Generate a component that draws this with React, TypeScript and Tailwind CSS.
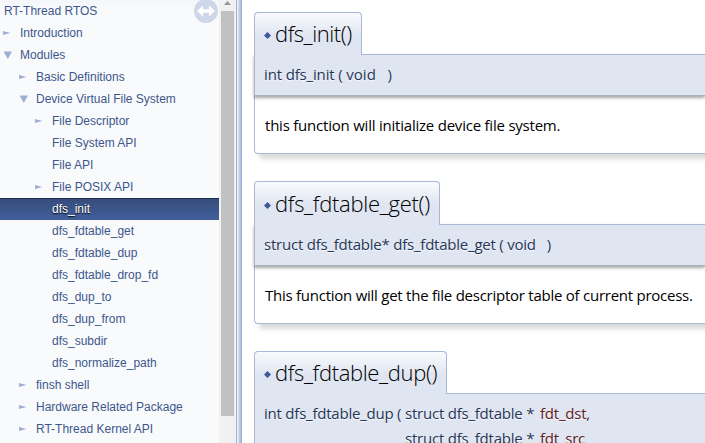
import React from "react";

type Arrow = "open" | "closed" | "none";
type Item = { label: string; level: number; arrow: Arrow; selected?: boolean };

const items: Item[] = [
  { label: "RT-Thread RTOS", level: 0, arrow: "none" },
  { label: "Introduction", level: 1, arrow: "closed" },
  { label: "Modules", level: 1, arrow: "open" },
  { label: "Basic Definitions", level: 2, arrow: "closed" },
  { label: "Device Virtual File System", level: 2, arrow: "open" },
  { label: "File Descriptor", level: 3, arrow: "closed" },
  { label: "File System API", level: 3, arrow: "none" },
  { label: "File API", level: 3, arrow: "none" },
  { label: "File POSIX API", level: 3, arrow: "closed" },
  { label: "dfs_init", level: 3, arrow: "none", selected: true },
  { label: "dfs_fdtable_get", level: 3, arrow: "none" },
  { label: "dfs_fdtable_dup", level: 3, arrow: "none" },
  { label: "dfs_fdtable_drop_fd", level: 3, arrow: "none" },
  { label: "dfs_dup_to", level: 3, arrow: "none" },
  { label: "dfs_dup_from", level: 3, arrow: "none" },
  { label: "dfs_subdir", level: 3, arrow: "none" },
  { label: "dfs_normalize_path", level: 3, arrow: "none" },
  { label: "finsh shell", level: 2, arrow: "closed" },
  { label: "Hardware Related Package", level: 2, arrow: "closed" },
  { label: "RT-Thread Kernel API", level: 2, arrow: "closed" },
];

const indents = ["pl-1", "pl-0", "pl-4", "pl-8"];

function ArrowIcon({ arrow }: { arrow: Arrow }) {
  return (
    <svg className="h-[22px] w-5 shrink-0" viewBox="0 0 20 22" fill="#9cafd4">
      {arrow === "closed" && <path d="M3 9 10.3 11 3 13Z" />}
      {arrow === "open" && <path d="M3.5 7.5H12L7.8 15Z" />}
    </svg>
  );
}

function Row({ item }: { item: Item }) {
  return (
    <div
      className={`flex h-[22px] shrink-0 items-center whitespace-nowrap text-[12px] leading-[22px] ${indents[item.level]} ${
        item.selected
          ? "border-t border-[#1d2c4d] bg-linear-to-b from-[#364d7c] to-[#425f9b] text-white [text-shadow:0_1px_1px_#000]"
          : "text-[#3d578c]"
      }`}
    >
      {item.level > 0 && <ArrowIcon arrow={item.arrow} />}
      <span className="-mt-px">{item.label}</span>
    </div>
  );
}

function Sidebar() {
  return (
    <nav className="relative flex w-[219px] shrink-0 flex-col overflow-hidden bg-linear-to-b from-[#f4f6fa] to-[#f9fafc] to-[10px] font-['Liberation_Sans',Arial,sans-serif]">
      {items.map((item) => (
        <Row key={item.label} item={item} />
      ))}
      <svg className="absolute left-[194px] top-[-1px]" width="24" height="24" viewBox="0 0 24 24">
        <circle cx="12" cy="12" r="12" fill="#ced7e9" />
        <path d="M3 12 9 6.5V10.3H15V6.5L21 12 15 17.5V13.7H9V17.5Z" fill="#fff" />
      </svg>
    </nav>
  );
}

function Scrollbar() {
  return (
    <div className="flex w-4 shrink-0 flex-col items-center bg-[#f1f1f1]">
      <svg className="h-[11px] w-[13px] shrink-0" viewBox="0 0 13 11">
        <path d="M3 5 6.5 1 10 5Z" fill="#959595" />
      </svg>
      <div className="h-[405px] w-[13px] bg-[#c1c1c1]" />
    </div>
  );
}

function Title({ children, className }: { children: string; className: string }) {
  return (
    <div
      className={`relative z-10 flex shrink-0 items-center rounded-t border border-b-0 border-[#a8b8d9] bg-linear-to-b from-[#f9fafc] from-0% via-[#dfe5f1] via-[55%] to-[#dfe5f1] pb-[2px] pl-[9px] ${className}`}
    >
      <svg className="mr-1 mt-[5px] h-[7px] w-[7px] shrink-0" viewBox="0 0 7 7">
        <path d="M3.5 0 7 3.5 3.5 7 0 3.5Z" fill="#3d5a98" />
      </svg>
      <h2 className="whitespace-nowrap text-[22px] font-light leading-[30px] text-black">{children}</h2>
    </div>
  );
}

function Body({ children }: { children: React.ReactNode }) {
  return (
    <div className="flex h-[58px] items-center rounded-bl border-b border-l border-[#a8b8d9] bg-white pl-[10px] pt-[2px] text-[15px] text-black shadow-[5px_5px_5px_rgba(0,0,0,0.15)]">
      {children}
    </div>
  );
}

const proto =
  "border-l border-t border-[#a8b8d9] bg-[#dfe5f1] pl-[9px] text-[15px] text-[#253555] [text-shadow:0_1px_1px_rgba(255,255,255,0.9)] whitespace-pre";
const protoEnd =
  "relative flex h-[42px] items-center pb-[2px] border-b border-b-[#a8b0c0] shadow-[0_2px_3px_rgba(0,0,0,0.35)]";

export default function App() {
  return (
    <div className="flex h-[443px] w-[705px] overflow-hidden bg-white">
      <Sidebar />
      <Scrollbar />
      <div className="w-[7px] shrink-0 bg-[linear-gradient(to_right,#f1f3f8_0_1px,#9cafd4_1px_2px,#f0f3f9_2px_3px,#d5deee_3px_4px,#c2cee5_4px_5px,#b0c0dd_5px_6px,#9cafd4_6px_7px)]" />
      <main className="flex min-w-0 flex-1 flex-col overflow-hidden pl-3 font-['Open_Sans','Noto_Sans',sans-serif]">
        <section className="mt-3 flex h-[142px] shrink-0 flex-col">
          <Title className="mb-[-1px] h-[43px] w-[108px] tracking-[-0.45px]">dfs_init()</Title>
          <div className={`${proto} ${protoEnd}`}>
            <span className="tracking-[-0.15px]">{"int dfs_init ( "}</span>
            <span className="tracking-[0.02px]">{"void   )"}</span>
          </div>
          <Body>
            <span className="tracking-[-0.22px]">this function will initialize device file system.</span>
          </Body>
        </section>
        <section className="mt-[27px] flex h-[143px] shrink-0 flex-col">
          <Title className="mb-[-1px] h-11 w-[186px] tracking-[-0.28px]">dfs_fdtable_get()</Title>
          <div className={`${proto} ${protoEnd}`}>
            <span className="tracking-[-0.22px]">{"struct dfs_fdtable* dfs_fdtable_get ( void   )"}</span>
          </div>
          <Body>
            <span className="tracking-[-0.25px]">This function will get the file descriptor table of current process.</span>
          </Body>
        </section>
        <section className="mt-[27px] flex shrink-0 flex-col">
          <Title className="mb-[-1px] h-[43px] w-[193px] tracking-[-0.34px]">dfs_fdtable_dup()</Title>
          <div
            className={`${proto} grid h-[80px] grid-cols-[141px_135px_auto] content-start pt-[7px] leading-[25px] tracking-[-0.22px]`}
          >
            <span>int dfs_fdtable_dup (</span>
            <span>struct dfs_fdtable *</span>
            <span className="text-[#602020]">fdt_dst,</span>
            <span className="col-start-2">struct dfs_fdtable *</span>
            <span className="text-[#602020]">fdt_src</span>
          </div>
        </section>
      </main>
    </div>
  );
}
